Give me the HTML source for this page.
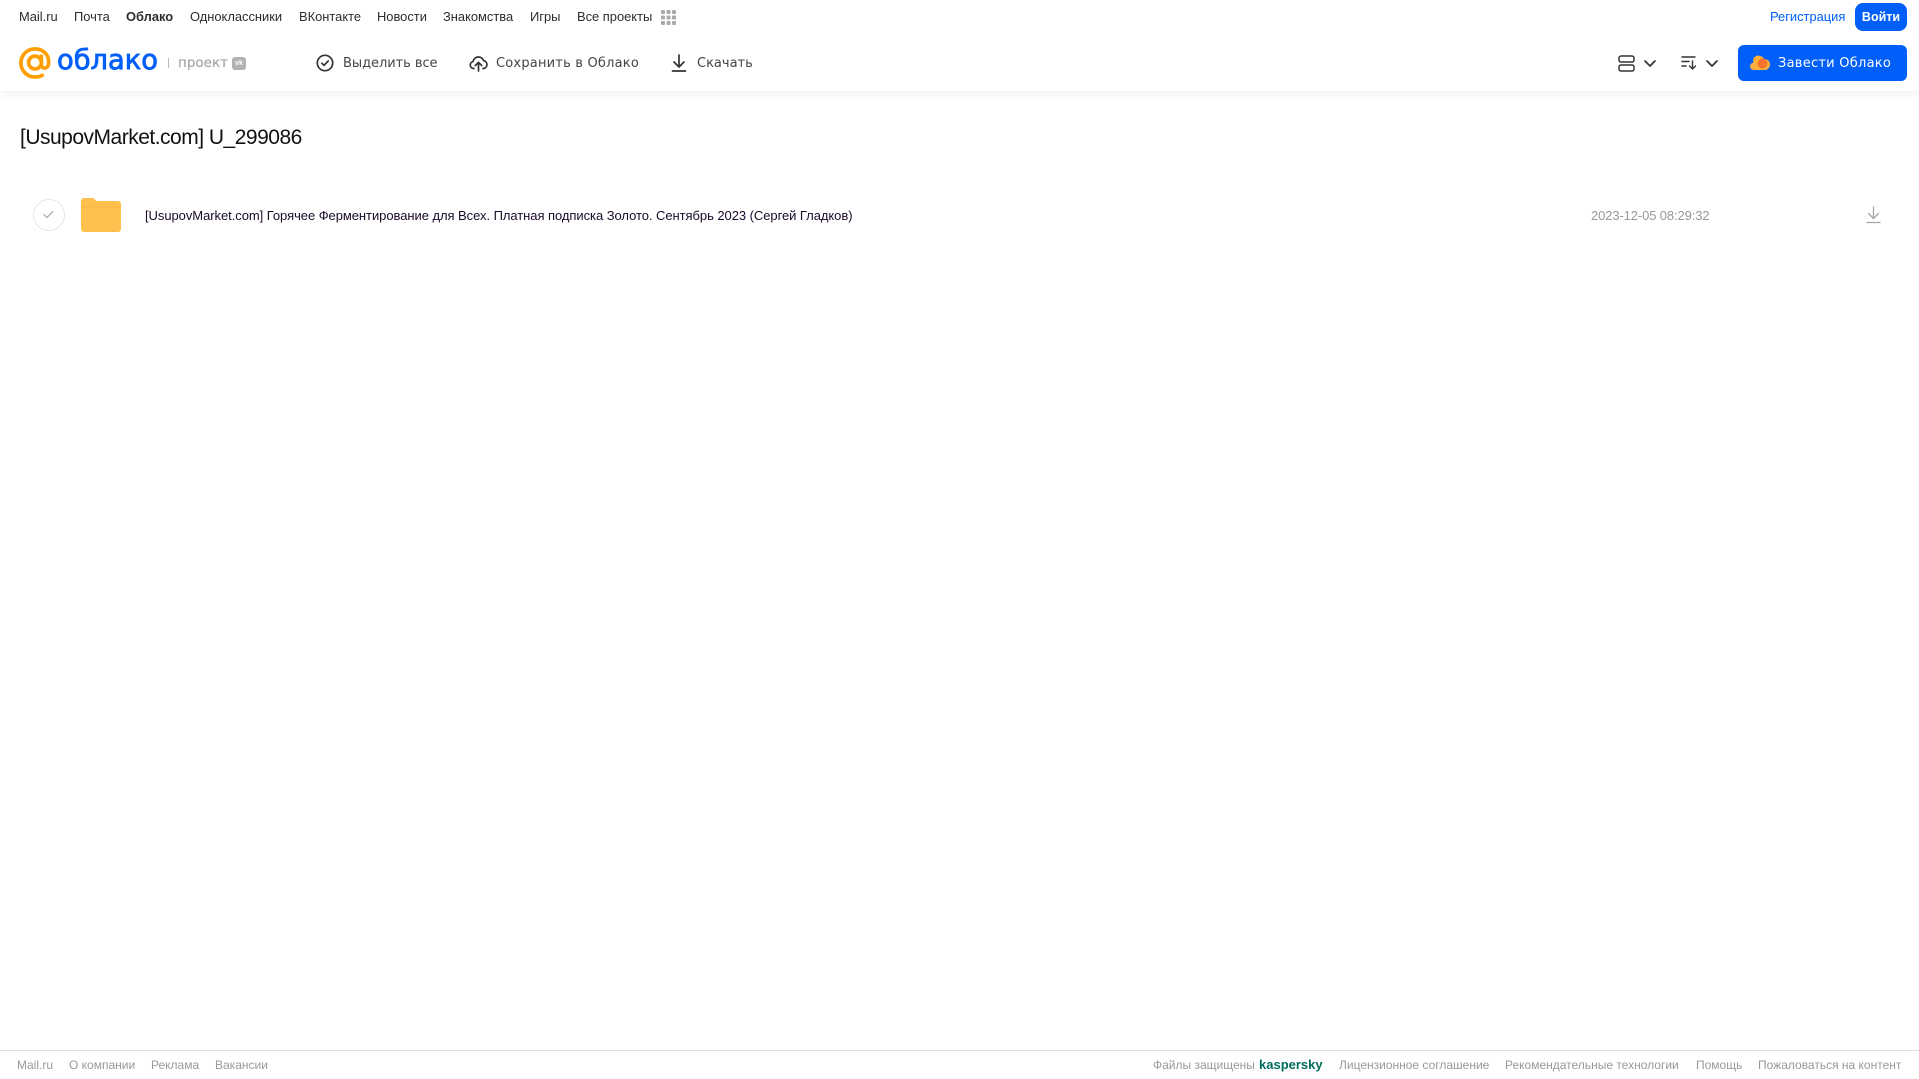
<!DOCTYPE html>
<html lang="ru"><head><meta charset="utf-8"><title>Облако</title>
<style>
html,body{margin:0;padding:0;background:#fff;width:1919px;height:1079px;overflow:hidden}
body{position:relative;font-family:"Liberation Sans",sans-serif}
.t{position:absolute;white-space:nowrap;line-height:16px}
.n{font-size:12.9px;color:#2c2d2e;top:9px}
.a{color:#444;top:56px;font-family:"DejaVu Sans","Liberation Sans",sans-serif;font-size:13px}
.f{font-size:12px;color:#999;top:1057px}
svg{position:absolute;overflow:visible}
</style></head><body>
<div style="position:absolute;left:0;top:0;width:1919px;height:91px;background:#fff;box-shadow:0 2px 8px rgba(0,0,0,.07)"></div>

<span class="t n" style="left:19px">Mail.ru</span>
<span class="t n" style="left:74px">Почта</span>
<span class="t n" style="left:126px;font-weight:bold">Облако</span>
<span class="t n" style="left:190px">Одноклассники</span>
<span class="t n" style="left:299px">ВКонтакте</span>
<span class="t n" style="left:377px">Новости</span>
<span class="t n" style="left:443px">Знакомства</span>
<span class="t n" style="left:530px">Игры</span>
<span class="t n" style="left:577px">Все проекты</span>
<svg style="left:661px;top:10px" width="15" height="15" fill="#aaa"><rect width="4" height="4" rx="1"/><rect x="5.5" width="4" height="4" rx="1"/><rect x="11" width="4" height="4" rx="1"/><rect y="5.5" width="4" height="4" rx="1"/><rect x="5.5" y="5.5" width="4" height="4" rx="1"/><rect x="11" y="5.5" width="4" height="4" rx="1"/><rect y="11" width="4" height="4" rx="1"/><rect x="5.5" y="11" width="4" height="4" rx="1"/><rect x="11" y="11" width="4" height="4" rx="1"/></svg>

<span class="t n" style="left:1770px;color:#005ff9">Регистрация</span>
<div style="position:absolute;left:1855px;top:3px;width:52px;height:28px;border-radius:8px;background:#005ff9;color:#fff;font-size:12.5px;font-weight:bold;line-height:28px;text-align:center">Войти</div>

<svg style="left:19px;top:47px" width="32" height="32" viewBox="0 0 33 33" fill="none" stroke="#ff9e00" stroke-width="3.800"><circle cx="16.5" cy="16" r="6.6"/><path d="M23 9.500V18c0 5 6.800 5 7.500 -.5C31.500 8 25 2 16.500 2A14.300 14.300 0 0 0 2 16.500C2 25 9 31 16.500 31c3 0 5.500-.6 7.500-1.800" stroke-linecap="round"/></svg>
<span class="t" style="left:57px;top:42px;line-height:38px;font-size:27.300px;color:#005ff9;font-family:'DejaVu Sans',sans-serif;-webkit-text-stroke:.8px #005ff9">облако</span>
<div style="position:absolute;left:168px;top:58px;width:1px;height:10px;background:#bbb"></div>
<span class="t" style="left:178px;top:55px;font-size:13.5px;color:#a6a6a6;font-family:'DejaVu Sans',sans-serif;-webkit-text-stroke:.2px #a6a6a6">проект</span>
<div style="position:absolute;left:232px;top:57px;width:14px;height:13px;border-radius:3px;background:#b3b3b3;color:#fff;font-size:7px;font-weight:bold;line-height:13px;text-align:center">vk</div>

<svg style="left:316px;top:54px" width="18" height="18" viewBox="0 0 18 18" fill="none" stroke="#333" stroke-width="1.700" stroke-linecap="round" stroke-linejoin="round"><circle cx="9" cy="9" r="7.700"/><path d="M5.800 9.200l2.200 2.200 4.200-4.400"/></svg>
<span class="t a" style="left:343px;letter-spacing:-.05px">Выделить все</span>
<svg style="left:469px;top:54px" width="19" height="18" viewBox="0 0 19 18" fill="none" stroke="#333" stroke-width="1.700" stroke-linecap="round" stroke-linejoin="round"><path d="M5 14.500H4.500A3.500 3.500 0 0 1 4 7.600 5.500 5.500 0 0 1 14.600 6.600 4 4 0 0 1 14.500 14.500H14"/><path d="M9.500 17V9M6.300 11.500l3.200-3.200 3.200 3.200"/></svg>
<span class="t a" style="left:496px;letter-spacing:.2px">Сохранить в Облако</span>
<svg style="left:671px;top:54px" width="16" height="18" viewBox="0 0 16 18" fill="none" stroke="#333" stroke-width="1.700" stroke-linecap="round" stroke-linejoin="round"><path d="M8 1v11M3 8l5 5 5-5M1.500 17h13"/></svg>
<span class="t a" style="left:697px">Скачать</span>

<svg style="left:1618px;top:55px" width="17" height="17" viewBox="0 0 17 17" fill="none" stroke="#333" stroke-width="1.500"><rect x="1" y="1" width="15" height="6" rx="2"/><rect x="1" y="10" width="15" height="6" rx="2"/></svg>
<svg style="left:1644px;top:60px" width="12" height="7" viewBox="0 0 12 7" fill="none" stroke="#333" stroke-width="1.700" stroke-linecap="round" stroke-linejoin="round"><path d="M1 1l5 5 5-5"/></svg>
<svg style="left:1681px;top:55px" width="16" height="15" viewBox="0 0 16 15" fill="none" stroke="#333" stroke-width="1.400" stroke-linecap="round" stroke-linejoin="round"><path d="M1 2h13M1 6.500h7M1 11h4M11.500 6v8M8.500 11l3 3 3-3"/></svg>
<svg style="left:1706px;top:60px" width="12" height="7" viewBox="0 0 12 7" fill="none" stroke="#333" stroke-width="1.700" stroke-linecap="round" stroke-linejoin="round"><path d="M1 1l5 5 5-5"/></svg>

<div style="position:absolute;left:1738px;top:45px;width:169px;height:36px;border-radius:6px;background:#005ff9"></div>
<svg style="left:1750px;top:54px" width="20" height="17" viewBox="0 0 20 17"><path d="M4 16a3.700 3.700 0 0 1-.5-7.400A5 5 0 0 1 10 2a5 5 0 0 1 4 3 5.500 5.500 0 0 1 1 11z" fill="#ffb03a"/><circle cx="12.500" cy="9.500" r="5" fill="#f4742b"/></svg>
<span class="t" style="left:1778px;top:56px;color:#fff;font-family:'DejaVu Sans',sans-serif;font-size:13px;letter-spacing:.25px">Завести Облако</span>

<span class="t" style="left:20px;top:125px;line-height:26px;font-size:21px;letter-spacing:-.5px;color:#111">[UsupovMarket.com] U_299086</span>

<div style="position:absolute;left:33px;top:199px;width:30px;height:30px;border:1px solid #e6e6e6;border-radius:50%"></div>
<svg style="left:43px;top:210px" width="11" height="9" viewBox="0 0 11 9" fill="none" stroke="#a5a5a5" stroke-width="1.200" stroke-linecap="round" stroke-linejoin="round"><path d="M1 4.500l3 3 6-6"/></svg>
<svg style="left:81px;top:198px" width="40" height="34" viewBox="0 0 40 34"><path d="M0 3a3 3 0 0 1 3-3h8c2 0 3 1 4 3h22a3 3 0 0 1 3 3v25a3 3 0 0 1-3 3H3a3 3 0 0 1-3-3z" fill="#ffc04f"/><path d="M0 9h40" stroke="#f9b63f" stroke-width="1"/></svg>
<span class="t" style="left:145px;top:208px;font-size:13px;letter-spacing:-.055px;color:#1a0a2a">[UsupovMarket.com] Горячее Ферментирование для Всех. Платная подписка Золото. Сентябрь 2023 (Сергей Гладков)</span>
<span class="t" style="left:1591px;top:208px;font-size:13px;letter-spacing:-.12px;color:#999">2023-12-05 08:29:32</span>
<svg style="left:1866px;top:206px" width="15" height="18" viewBox="0 0 15 18" fill="none" stroke="#a5a5a5" stroke-width="1.300" stroke-linecap="round" stroke-linejoin="round"><path d="M7.500 1v11M2.500 7.500l5 5 5-5M1 16.500h13"/></svg>

<div style="position:absolute;left:0;top:1050px;width:1919px;height:1px;background:#ddd"></div>
<span class="t f" style="left:17px">Mail.ru</span>
<span class="t f" style="left:69px">О компании</span>
<span class="t f" style="left:151px">Реклама</span>
<span class="t f" style="left:215px">Вакансии</span>
<span class="t f" style="left:1153px">Файлы защищены</span>
<span class="t f" style="left:1259px;color:#006d5c;font-weight:bold;font-size:13px">kaspersky</span>
<span class="t f" style="left:1339px">Лицензионное соглашение</span>
<span class="t f" style="left:1505px">Рекомендательные технологии</span>
<span class="t f" style="left:1696px">Помощь</span>
<span class="t f" style="left:1758px">Пожаловаться на контент</span>
</body></html>
